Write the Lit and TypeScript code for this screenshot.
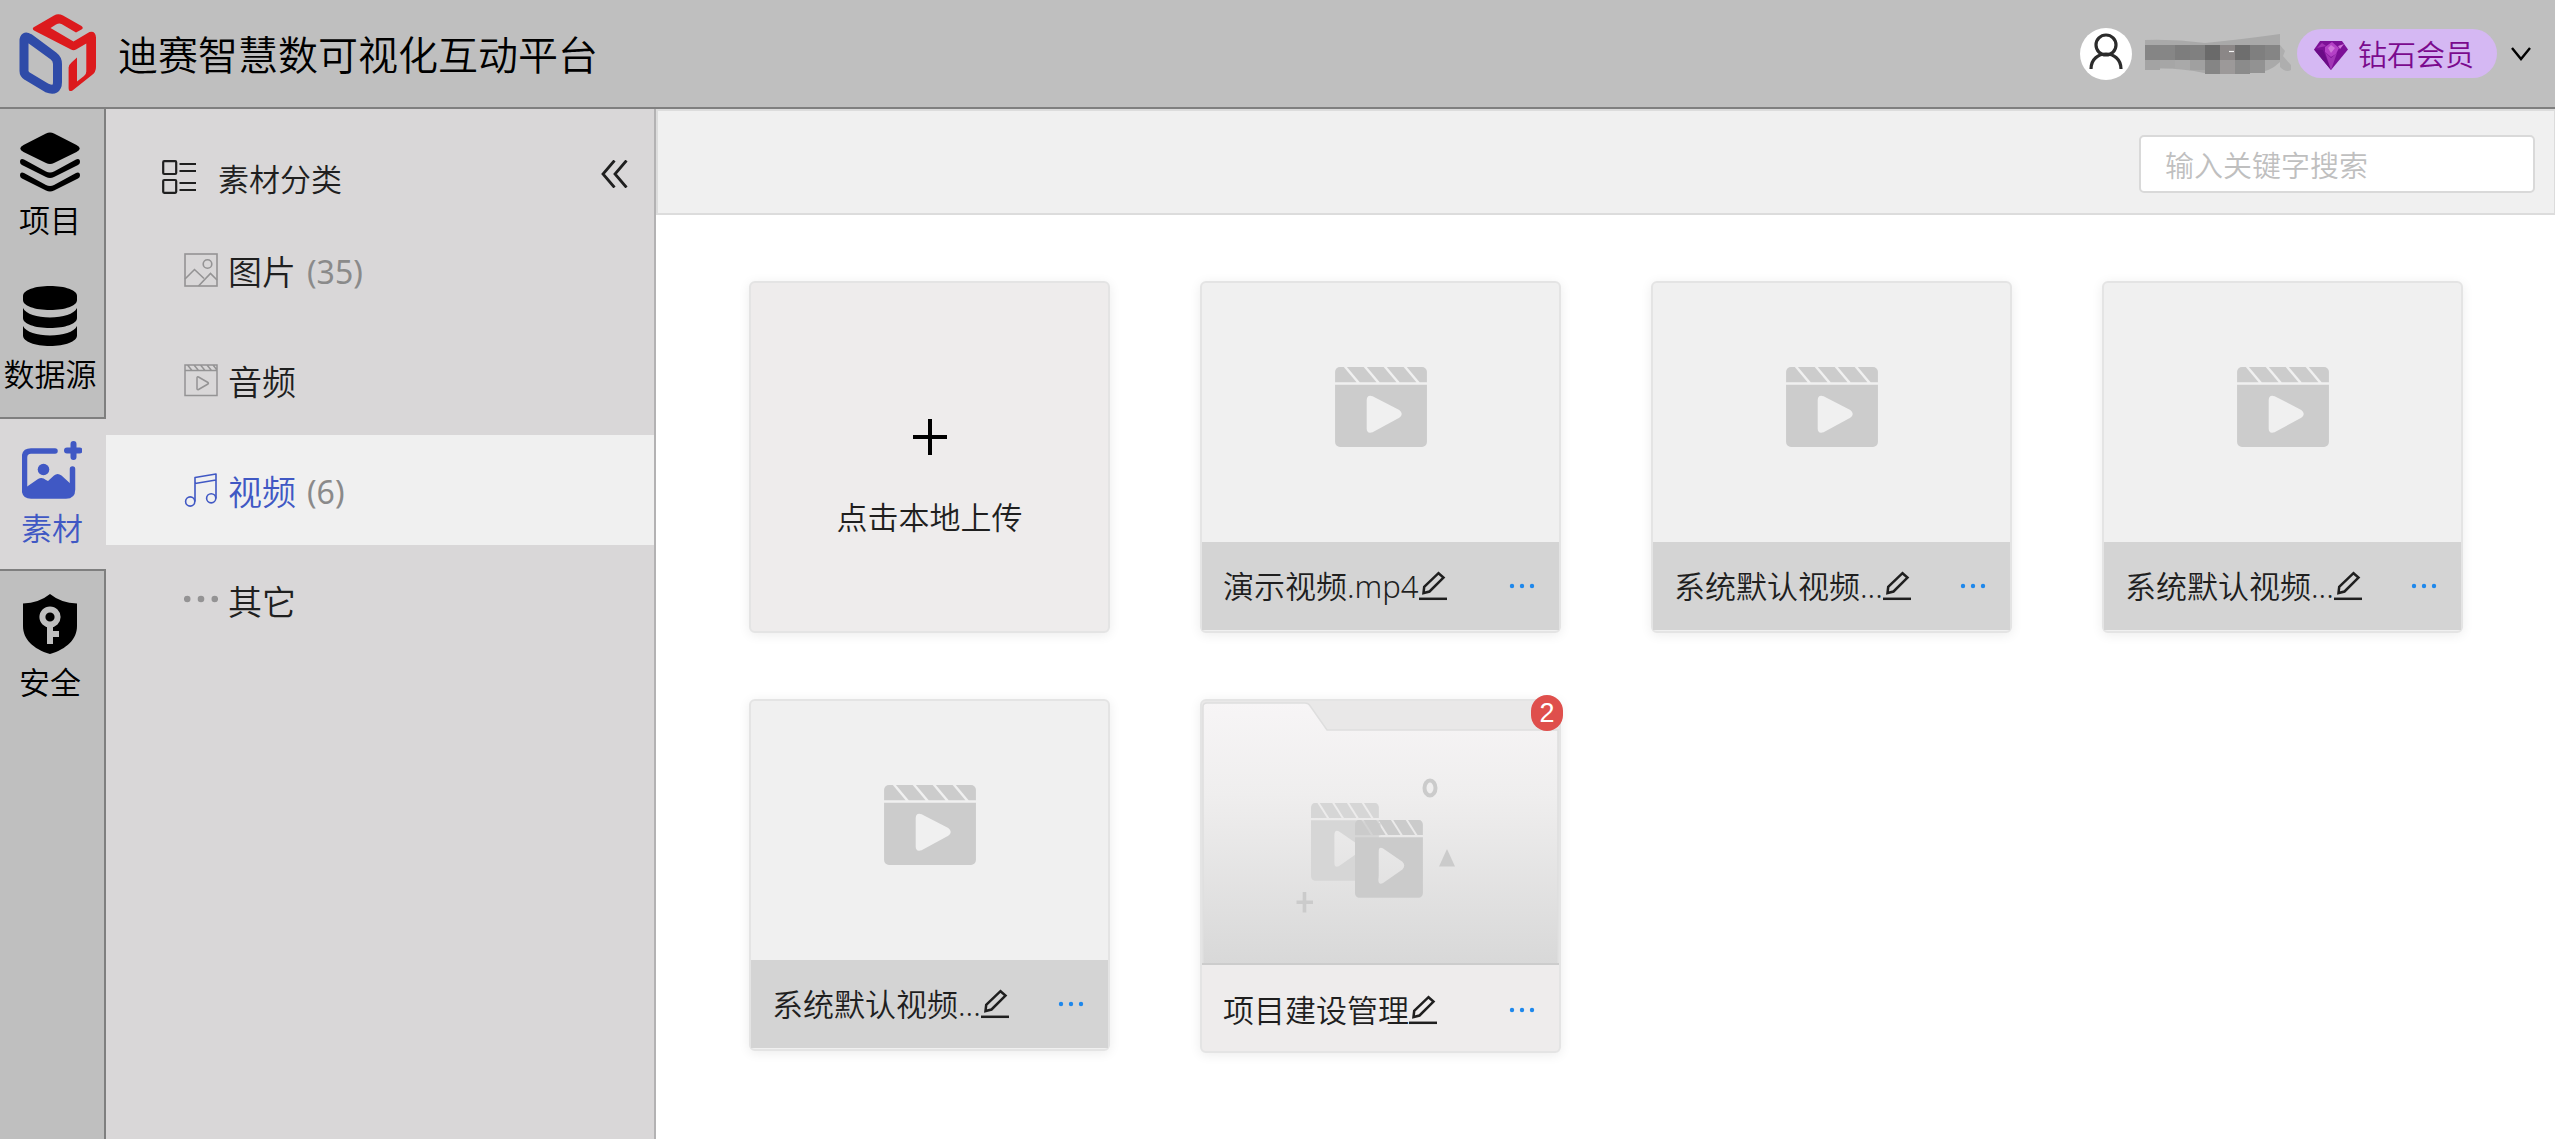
import { LitElement, html, svg, css, nothing } from "lit";
import { customElement, property, state } from "lit/decorators.js";
import { classMap } from "lit/directives/class-map.js";

const baseStyles = css`
  * {
    box-sizing: border-box;
  }
  a {
    color: inherit;
    text-decoration: none;
  }
  button {
    margin: 0;
    padding: 0;
    border: 0;
    background: none;
    color: inherit;
    font: inherit;
    cursor: pointer;
  }
  svg {
    display: block;
    flex: none;
  }
`;

/* Clapperboard, drawn on a 93 x 81 box */
const clapper = svg`
  <path d="M0 15.5V5a5 5 0 0 1 5-5h3.8l13 15.5z"/>
  <path d="M12 0h17l13 15.5H25z"/>
  <path d="M32.200 0h17l13 15.500h-17z"/>
  <path d="M52.400 0h17l13 15.500h-17z"/>
  <path d="M72.600 0H88a5 5 0 0 1 5 5v10.500h-7.400z"/>
  <path fill-rule="evenodd" d="M0 18h93v58a5 5 0 0 1-5 5H5a5 5 0 0 1-5-5zM32 34v28q0 6 6 4l27-14.500q5-4 0-8L38 29.500q-6-2-6 4.500z"/>`;

const logo = html`<svg width="77" height="80" viewBox="0 0 77 80" aria-hidden="true">
  <path fill="none" stroke="#2f4ba8" stroke-width="9" stroke-linejoin="round"
    d="M5 27v30q0 3 3 5l20 12q10.500 4 10.500-6V50q0-5-4-8L10 24q-5-3-5 3z"/>
  <path fill="#dc1a1d"
    d="M16 12.500 35 1.500q4-2.500 9 0L62.500 12q2.500 2 0 3.500L57 18.500l-14.500-8.500q-2.500-1-5.500.5l-5.500 3.500 23 13.500L70.500 18q6-1.500 6.500 5.500V53q0 5-4 8L53.500 76.500Q49.600 78.500 49.600 74V53.500q.4-3 3.400-5.500l5-4.500v24l7-5.500q2.300-1.700 2.300-4.500V29.500L57 35.500q-2.500 1.500-5 0L16 17q-4.500-2.500 0-4.500z"/>
</svg>`;

const navIcons = {
  project: html`<svg width="60" height="60" viewBox="0 0 60 60" fill="currentColor" aria-hidden="true">
    <path d="M26 1.500q4-2 8 0l22.500 11.500q6.500 3.500 0 7L34 31q-4 2-8 0L3.500 20q-6.500-3.500 0-7z"/>
    <path d="M0 30q0-4 4-2.500l22 12q4 2 8 0l22-12q4-1.500 4 2.500 0 2-2 3L34 45q-4 2-8 0L2 33q-2-1-2-3z"/>
    <path d="M0 43.500q0-4 4-2.500l22 12q4 2 8 0l22-12q4-1.500 4 2.500 0 2-2 3L34 58.500q-4 2-8 0L2 46.500q-2-1-2-3z"/>
  </svg>`,
  data: html`<svg width="60" height="60" viewBox="0 0 60 60" fill="currentColor" aria-hidden="true">
    <path d="M3 10C3 4 15 0 30 0s27 4 27 10v4c0 6-12 10-27 10S3 20 3 14z"/>
    <path d="M3 22c3 6 14 9.500 27 9.500S54 28 57 22v10c0 6-12 10-27 10S3 38 3 32z"/>
    <path d="M3 40c3 6 14 9.500 27 9.500S54 46 57 40v9.500c0 6-12 10.500-27 10.500S3 55.500 3 49.500z"/>
  </svg>`,
  media: html`<svg width="60" height="60" viewBox="0 0 60 60" aria-hidden="true">
    <path fill="none" stroke="currentColor" stroke-width="5.500" stroke-linecap="round" d="M33 11H9q-6.500 0-6.500 6.500v32q0 6.500 6.500 6.500h35q6.500 0 6.500-6.500V29"/>
    <circle cx="21.500" cy="29.500" r="5.800" fill="currentColor"/>
    <path fill="currentColor" d="M3 52V48L16 39q4-2.500 8 1l2 1 6-5.500q3.500-3 7.500 0L51 46v6q0 5-6 5H9q-6 0-6-5z"/>
    <path fill="none" stroke="currentColor" stroke-width="6" stroke-linecap="round" d="M51.500 4v13M45 10.500h12.500"/>
  </svg>`,
  security: html`<svg width="60" height="60" viewBox="0 0 60 60" aria-hidden="true">
    <path fill="currentColor" d="M30 0q11 9 27 9.500V32c0 13-10 23-27 28C13 55 3 45 3 32V9.500Q19 9 30 0z"/>
    <circle cx="30" cy="23" r="7.600" fill="none" stroke="#bfbfbf" stroke-width="6"/>
    <path fill="#bfbfbf" d="M27 31h6v6h6v6h-6v7h-6z"/>
  </svg>`,
};

const categoryIcons = {
  image: html`<svg width="34" height="34" viewBox="0 0 34 34" fill="none" stroke="currentColor" stroke-width="1.600" aria-hidden="true">
    <rect x="1" y="1" width="32" height="32"/>
    <circle cx="23.500" cy="11" r="4.300"/>
    <path d="M1 26 10.500 16.500l9.500 9M14.500 33 26.500 20.500 33 27"/>
  </svg>`,
  audio: html`<svg width="34" height="34" viewBox="0 0 34 34" fill="none" stroke="currentColor" stroke-width="1.500" aria-hidden="true">
    <path d="M1 2h32v30.500H1zM1 7.500h32M3.500 2 8 7.500M10 2l4.500 5.500M16.500 2 21 7.500M23 2l4.500 5.500M29 2l4 5"/>
    <path stroke-linejoin="round" d="M13 14.500v11.500q.5 1 1.500.5l9.500-5.500q.8-.8 0-1.500L14.500 14q-1-.5-1.500.5z"/>
  </svg>`,
  video: html`<svg width="34" height="34" viewBox="0 0 34 34" fill="none" stroke="currentColor" stroke-width="1.600" stroke-linejoin="round" aria-hidden="true">
    <path d="M11 28.500V4.500L32 1v24.500M11 10.500 32 7"/>
    <circle cx="6.200" cy="28.500" r="4.600"/>
    <circle cx="27.200" cy="25.300" r="4.600"/>
  </svg>`,
  other: html`<svg width="34" height="34" viewBox="0 0 34 34" fill="currentColor" aria-hidden="true">
    <circle cx="3.200" cy="16" r="3.300"/><circle cx="17" cy="16" r="3.300"/><circle cx="30.800" cy="16" r="3.300"/>
  </svg>`,
};

const editIcon = html`<svg width="28" height="30" viewBox="0 0 28 30" fill="none" stroke="currentColor" stroke-width="2.500" aria-hidden="true">
  <path d="M4.500 22 5.200 15.800 19.500 2.200 24.500 6.600 10.500 20.500z"/>
  <path d="M0 27.800h28"/>
</svg>`;

const folderArt = html`<svg class="folder-art" viewBox="0 0 357 264" preserveAspectRatio="none" aria-hidden="true">
  <defs>
    <linearGradient id="front" x1="0" y1="0" x2="0" y2="1">
      <stop offset="0" stop-color="#f7f5f6"/>
      <stop offset="0.350" stop-color="#efeeee"/>
      <stop offset="1" stop-color="#d8d8d8"/>
    </linearGradient>
  </defs>
  <rect width="357" height="264" fill="#e9e8e8"/>
  <path fill="url(#front)" stroke="#dedede" stroke-width="1.500" d="M1 264V6q0-4 4-4h98q3 0 4.500 2L125 29h231v235z"/>
  <path stroke="#cccccc" stroke-width="2" d="M0 263h357"/>
  <g fill="#d6d6d6" transform="translate(109 102) scale(.73 .960)">${clapper}</g>
  <g fill="#cbcbcb" transform="translate(153 119) scale(.73 .960)">
    <path fill="#d3d3d3" d="M0 3h35v13H0z"/>
    ${clapper}
  </g>
  <ellipse cx="228" cy="87" rx="5.500" ry="7.500" fill="none" stroke="#cbcbcb" stroke-width="4"/>
  <path fill="#cbcbcb" d="m245 148 8 17.500h-16z"/>
  <path stroke="#cbcbcb" stroke-width="3.600" d="M102.500 191v20.500M94.500 201.300h16.500"/>
</svg>`;

interface MediaItem {
  name: string;
  count?: number;
}

@customElement("media-card")
class MediaCard extends LitElement {
  @property({ attribute: false }) item!: MediaItem;

  static styles = [
    baseStyles,
    css`
      :host {
        display: block;
        position: relative;
      }
      .card {
        border: 2px solid #e4e4e4;
        border-radius: 6px;
        background: #f0f0f0;
        box-shadow: 0 2px 12px rgba(0, 0, 0, 0.08);
      }
      .card.folder {
        background: #eeecec;
      }
      .preview {
        display: grid;
        place-items: center;
        height: 259px;
        padding-bottom: 12px;
      }
      .folder .preview {
        display: block;
        height: 264px;
        padding: 0;
      }
      .folder-art {
        width: 100%;
        height: 100%;
        border-radius: 4px 4px 0 0;
      }
      .footer {
        display: flex;
        align-items: center;
        height: 88px;
        padding: 0 24px 0 21px;
        margin-bottom: 1px;
        background: #d4d4d4;
        color: #1f1f1f;
        font-size: 31px;
        line-height: 44px;
      }
      .folder .footer {
        height: 86px;
        margin: 0;
        padding-top: 4px;
        background: none;
      }
      .name {
        min-width: 0;
        overflow: hidden;
        white-space: nowrap;
      }
      .more {
        margin-left: auto;
        color: #1e88ec;
      }
      .badge {
        position: absolute;
        top: -4px;
        right: -2px;
        min-width: 32px;
        height: 36px;
        padding: 0 8px;
        border-radius: 16px;
        background: #df4f4c;
        color: #fff;
        font: 27px/36px "Liberation Sans", sans-serif;
        text-align: center;
      }
    `,
  ];

  render() {
    const { name, count } = this.item;
    const folder = count !== undefined;
    return html`<article class=${classMap({ card: true, folder })}>
        <div class="preview">
          ${folder
            ? folderArt
            : html`<svg width="92" height="80" viewBox="0 0 93 81" fill="#cccccc" aria-hidden="true">${clapper}</svg>`}
        </div>
        <div class="footer">
          <span class="name">${name}</span>
          <button aria-label="重命名">${editIcon}</button>
          <button class="more" aria-label="更多">
            <svg width="26" height="6" viewBox="0 0 26 6" fill="currentColor" aria-hidden="true">
              <circle cx="3" cy="3" r="2.200"/><circle cx="13" cy="3" r="2.200"/><circle cx="23" cy="3" r="2.200"/>
            </svg>
          </button>
        </div>
      </article>
      ${folder ? html`<span class="badge">${count}</span>` : nothing}`;
  }
}

@customElement("app-header")
class AppHeader extends LitElement {
  static styles = [
    baseStyles,
    css`
      :host {
        display: flex;
        align-items: center;
        height: 109px;
        padding: 0 24px 0 19px;
        border-bottom: 2px solid #7f7f7f;
        background: #bfbfbf;
        color: #000;
      }
      .title {
        margin: 0 auto 0 22px;
        padding-top: 2px;
        font-size: 40px;
        font-weight: inherit;
        line-height: 56px;
      }
      .account {
        display: flex;
        align-items: center;
      }
      .avatar {
        display: grid;
        place-items: center;
        width: 52px;
        height: 52px;
        margin-right: 13px;
        border-radius: 50%;
        background: #fff;
        color: #2b2b2b;
      }
      .avatar svg {
        margin-bottom: 4px;
      }
      .member {
        display: flex;
        align-items: center;
        gap: 10px;
        height: 49px;
        margin: 0 14px 0 6px;
        padding: 2px 23px 0 17px;
        border-radius: 25px;
        background: #d5b8f3;
        color: #7b0a8e;
        font-size: 29px;
        line-height: 42px;
      }
    `,
  ];

  render() {
    const row = ["#858585", "#868686", "#7d7d7d", "#808080", "#6a6a6a", "#8b8787", "#6e6e6e", "#7f7f7f", "#858585"];
    const low = ["#a3a3a3", "#a6a6a6", "#a9a9a9", "#a0a0a0", "#858585", "#9c9999", "#8b8b8b", "#929292"];
    const lowHeights = [10, 8, 8, 10, 14, 14, 14, 13];
    return html`${logo}
      <h1 class="title">迪赛智慧数可视化互动平台</h1>
      <div class="account">
        <a class="avatar" href="#account" aria-label="账户">
          <svg width="34" height="37" viewBox="0 0 34 37" fill="none" stroke="currentColor" stroke-width="3.200" aria-hidden="true">
            <circle cx="17" cy="12" r="10"/>
            <path d="M2 36C2 16 32 16 32 36"/>
          </svg>
        </a>
        <svg width="146" height="44" viewBox="0 0 146 44" aria-hidden="true">
          <path fill="#a9a9a9" d="M0 8q30-1 60 3 40-4 75-9v28q-12 12-30 11-22 1-46 0-26-6-59-4z"/>
          ${row.map((c, i) => svg`<rect x=${i * 15} y="13" width="15" height="15" fill=${c}/>`)}
          ${low.map((c, i) => svg`<rect x=${i * 15} y="28" width="15" height=${lowHeights[i]} fill=${c}/>`)}
          <path fill="#aeaeae" d="m135 13 5 6-2 5 8 9v5q-5 3-11-3z"/>
          <path stroke="#f4f4f4" stroke-width="1.200" d="M84 19.500h5"/>
        </svg>
        <a class="member" href="#member">
          <svg width="34" height="30" viewBox="0 0 34 30" aria-hidden="true">
            <path fill="#7d1097" d="M6 1h22l6 8.500L17 30 0 9.500z"/>
            <path fill="#6a0b86" d="M0 9.500 9 10l8 20z"/>
            <path fill="#b440c6" d="m11 7 7-5 7 6-3 6-5 3-6-5z"/>
            <path fill="#a235b6" d="m11 12 6 18 6-17-6 5z"/>
            <path fill="#cf74da" d="m17 5 4 3-4 5-3-5zM24 6l6-2-4 5z"/>
            <path fill="#a332b6" d="m3 8 5-5 4 3z"/>
          </svg>
          钻石会员
        </a>
        <button aria-label="展开账户菜单">
          <svg width="20" height="14" viewBox="0 0 20 14" fill="none" stroke="currentColor" stroke-width="2.400" aria-hidden="true">
            <path d="m1 1 9 11 9-11"/>
          </svg>
        </button>
      </div>`;
  }
}

@customElement("side-nav")
class SideNav extends LitElement {
  static styles = [
    baseStyles,
    css`
      :host {
        display: flex;
        flex-direction: column;
        width: 106px;
        background: #bfbfbf;
        color: #000;
      }
      .item {
        display: flex;
        flex-direction: column;
        align-items: center;
        gap: 6px;
        height: 154px;
        padding: 23px 4px 0 0;
        border-right: 2px solid #7f7f7f;
        font-size: 31px;
        line-height: 44px;
        white-space: nowrap;
      }
      .item.active {
        padding: 21px 2px 0 0;
        border: solid #7f7f7f;
        border-width: 2px 0;
        background: #d9d7d8;
        color: #4058c4;
      }
      .rest {
        flex: 1;
        border-right: 2px solid #7f7f7f;
      }
    `,
  ];

  render() {
    const items = [
      { id: "project", label: "项目", icon: navIcons.project },
      { id: "data", label: "数据源", icon: navIcons.data },
      { id: "media", label: "素材", icon: navIcons.media },
      { id: "security", label: "安全", icon: navIcons.security },
    ];
    return html`${items.map(
        (i) => html`<a class=${classMap({ item: true, active: i.id === "media" })} href="#${i.id}">${i.icon}<span>${i.label}</span></a>`
      )}
      <div class="rest"></div>`;
  }
}

@customElement("category-panel")
class CategoryPanel extends LitElement {
  @state() private selected = "video";

  static styles = [
    baseStyles,
    css`
      :host {
        display: block;
        width: 550px;
        border-right: 2px solid #b3b2b3;
        background: #d9d7d8;
        color: #1f1f1f;
      }
      .head {
        display: flex;
        align-items: flex-start;
        height: 106px;
        padding: 48px 26px 0 56px;
      }
      .head > svg,
      .collapse {
        margin-top: 3px;
      }
      .heading {
        margin: 0 auto 0 22px;
        font-size: 31px;
        font-weight: inherit;
        line-height: 44px;
      }
      .category {
        display: flex;
        align-items: center;
        width: 100%;
        height: 110px;
        padding-left: 78px;
        font-size: 34px;
        line-height: 46px;
        text-align: left;
      }
      .category svg {
        color: #949394;
      }
      .name {
        padding: 4px 0 0 10px;
      }
      .count {
        padding: 4px 0 0 11px;
        color: #8a8a8a;
        font-size: 32px;
        font-weight: 400;
      }
      .selected {
        background: #f0f0f0;
      }
      .selected .name,
      .selected svg {
        color: #4058c4;
      }
    `,
  ];

  render() {
    const categories = [
      { id: "image", label: "图片", count: 35, icon: categoryIcons.image },
      { id: "audio", label: "音频", icon: categoryIcons.audio },
      { id: "video", label: "视频", count: 6, icon: categoryIcons.video },
      { id: "other", label: "其它", icon: categoryIcons.other },
    ];
    return html`<div class="head">
        <svg width="34" height="34" viewBox="0 0 34 34" fill="none" stroke="currentColor" stroke-width="2.200" aria-hidden="true">
          <rect x="1.200" y="1.200" width="13" height="12.800" rx="1"/>
          <rect x="1.200" y="20" width="13" height="12.800" rx="1"/>
          <path d="M17.500 4H34M17.500 11H34M17.500 23H34M17.500 30H34"/>
        </svg>
        <h2 class="heading">素材分类</h2>
        <button class="collapse" aria-label="收起">
          <svg width="27" height="28" viewBox="0 0 27 28" fill="none" stroke="currentColor" stroke-width="2.800" aria-hidden="true">
            <path d="M13.500.5 2 14l11.500 13.500M25.500.5 14 14l11.500 13.500"/>
          </svg>
        </button>
      </div>
      ${categories.map(
        (c) => html`<button
          class=${classMap({ category: true, selected: c.id === this.selected })}
          @click=${() => (this.selected = c.id)}
        >
          ${c.icon}<span class="name">${c.label}</span>${c.count ? html`<span class="count">(${c.count})</span>` : nothing}
        </button>`
      )}`;
  }
}

@customElement("app-root")
class AppRoot extends LitElement {
  static styles = [
    baseStyles,
    css`
      :host {
        display: flex;
        flex-direction: column;
        min-height: 100vh;
        background: #fff;
        font-family: "Noto Sans", "Noto Sans CJK SC", sans-serif;
        font-weight: 350;
      }
      .body {
        display: flex;
        flex: 1;
      }
      side-nav,
      category-panel {
        flex: none;
      }
      .main {
        flex: 1;
        min-width: 0;
      }
      .toolbar {
        display: flex;
        align-items: center;
        justify-content: flex-end;
        height: 106px;
        padding: 4px 19px 0 0;
        border: solid #dcdcdc;
        border-width: 2px 1px 2px 2px;
        background: #f0f0f0;
      }
      .search {
        width: 396px;
        height: 58px;
        padding: 2px 24px 0;
        border: 2px solid #d9d9d9;
        border-radius: 5px;
        background: #fff;
        color: #1f1f1f;
        font: inherit;
        font-size: 29px;
        outline: none;
      }
      .search::placeholder {
        color: #bfbfbf;
      }
      .grid {
        display: grid;
        grid-template-columns: repeat(4, minmax(0, 1fr));
        align-items: start;
        gap: 66px 90px;
        padding: 66px 92px 66px 93px;
      }
      .upload {
        display: flex;
        flex-direction: column;
        align-items: center;
        height: 352px;
        padding-top: 136px;
        gap: 40px;
        border: 2px solid #e4e4e4;
        border-radius: 6px;
        background: #eeecec;
        box-shadow: 0 2px 12px rgba(0, 0, 0, 0.08);
        color: #1f1f1f;
        font-size: 31px;
        line-height: 44px;
      }
    `,
  ];

  render() {
    const items: MediaItem[] = [
      { name: "演示视频.mp4" },
      { name: "系统默认视频..." },
      { name: "系统默认视频..." },
      { name: "系统默认视频..." },
      { name: "项目建设管理", count: 2 },
    ];
    return html`<app-header></app-header>
      <div class="body">
        <side-nav></side-nav>
        <category-panel></category-panel>
        <main class="main">
          <div class="toolbar">
            <input class="search" type="search" placeholder="输入关键字搜索" aria-label="输入关键字搜索" />
          </div>
          <div class="grid">
            <button class="upload">
              <svg width="34" height="36" viewBox="0 0 34 36" stroke="#000" stroke-width="4" aria-hidden="true">
                <path d="M17 0v36M0 18h34"/>
              </svg>
              <span>点击本地上传</span>
            </button>
            ${items.map((item) => html`<media-card .item=${item}></media-card>`)}
          </div>
        </main>
      </div>`;
  }
}
